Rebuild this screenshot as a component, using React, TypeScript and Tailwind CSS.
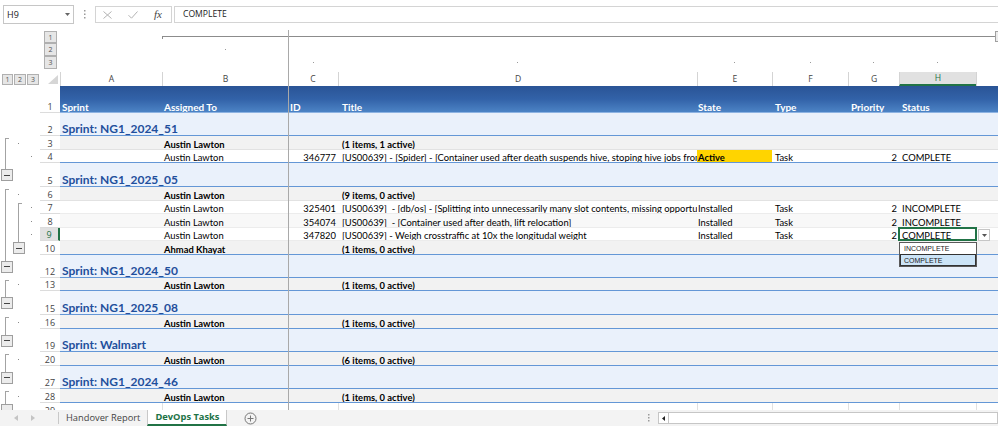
import React from 'react';

type G = '' | 'dot' | 'line' | 'start' | 'btn';
type Kind = 'head' | 'sprint' | 'group' | 'data' | 'blank';
interface RowDef {
  n: string;
  h: string;
  kind: Kind;
  g: [G, G, G];
  blue?: boolean;
  sel?: boolean;
  shade?: boolean;
  active?: boolean;
  t?: string;
  b?: string;
  c?: string;
  d?: string;
  e?: string;
  f?: string;
  p?: string;
  s?: string;
}

const UI = "font-['Open_Sans',sans-serif]";
const CELLF = "font-['Lato',sans-serif]";

const rows: RowDef[] = [
  { n: '1', h: 'h-[27px]', kind: 'head', g: ['', '', ''] },
  { n: '2', h: 'h-[23px]', kind: 'sprint', g: ['', '', ''], t: 'Sprint: NG1_2024_51' },
  { n: '3', h: 'h-[14px]', kind: 'group', g: ['start', 'dot', ''], b: 'Austin Lawton', d: '(1 items, 1 active)' },
  {
    n: '4', h: 'h-[13px]', kind: 'data', g: ['line', '', 'dot'], blue: true, b: 'Austin Lawton', c: '346777',
    d: '[US00639] - [Spider] - [Container used after death suspends hive, stoping hive jobs from running]',
    e: 'Active', active: true, f: 'Task', p: '2', s: 'COMPLETE',
  },
  { n: '5', h: 'h-[24px]', kind: 'sprint', g: ['btn', '', ''], t: 'Sprint: NG1_2025_05' },
  { n: '6', h: 'h-[14px]', kind: 'group', g: ['start', 'dot', ''], b: 'Austin Lawton', d: '(9 items, 0 active)' },
  {
    n: '7', h: 'h-[13px]', kind: 'data', g: ['line', 'start', 'dot'], b: 'Austin Lawton', c: '325401',
    d: '[US00639]  - [db/os] - [Splitting into unnecessarily many slot contents, missing opportunities]',
    e: 'Installed', f: 'Task', p: '2', s: 'INCOMPLETE',
  },
  {
    n: '8', h: 'h-[14px]', kind: 'data', g: ['line', 'line', 'dot'], shade: true, b: 'Austin Lawton', c: '354074',
    d: '[US00639]  - [Container used after death, lift relocation]', e: 'Installed', f: 'Task', p: '2', s: 'INCOMPLETE',
  },
  {
    n: '9', h: 'h-[13px]', kind: 'data', g: ['line', 'line', 'dot'], sel: true, b: 'Austin Lawton', c: '347820',
    d: '[US00639] - Weigh crosstraffic at 10x the longitudal weight', e: 'Installed', f: 'Task', p: '2', s: 'COMPLETE',
  },
  { n: '10', h: 'h-[14px]', kind: 'group', g: ['line', 'btn', ''], blue: true, b: 'Ahmad Khayat', d: '(1 items, 0 active)' },
  { n: '12', h: 'h-[23px]', kind: 'sprint', g: ['btn', '', ''], t: 'Sprint: NG1_2024_50' },
  { n: '13', h: 'h-[13px]', kind: 'group', g: ['start', 'dot', ''], blue: true, b: 'Austin Lawton', d: '(1 items, 0 active)' },
  { n: '15', h: 'h-[24px]', kind: 'sprint', g: ['btn', '', ''], t: 'Sprint: NG1_2025_08' },
  { n: '16', h: 'h-[14px]', kind: 'group', g: ['start', 'dot', ''], blue: true, b: 'Austin Lawton', d: '(1 items, 0 active)' },
  { n: '19', h: 'h-[23px]', kind: 'sprint', g: ['btn', '', ''], t: 'Sprint: Walmart' },
  { n: '20', h: 'h-[14px]', kind: 'group', g: ['start', 'dot', ''], blue: true, b: 'Austin Lawton', d: '(6 items, 0 active)' },
  { n: '27', h: 'h-[23px]', kind: 'sprint', g: ['btn', '', ''], t: 'Sprint: NG1_2024_46' },
  { n: '28', h: 'h-[14px]', kind: 'group', g: ['start', 'dot', ''], blue: true, b: 'Austin Lawton', d: '(1 items, 0 active)' },
  { n: '29', h: 'h-[14px]', kind: 'blank', g: ['btn', '', ''] },
];

function MinusBtn({ cls }: { cls: string }) {
  return (
    <div className={`w-[12px] h-[12px] shrink-0 border border-[#9e9e9e] bg-[#ececec] flex items-center justify-center ${cls}`}>
      <div className="w-[6px] h-px bg-[#444]" />
    </div>
  );
}

function Gut({ t, lvl }: { t: G; lvl: number }) {
  if (t === 'dot')
    return (
      <div className="w-[13px] h-full flex items-center shrink-0">
        <div className="ml-[5px] w-px h-px bg-[#8a8a8a]" />
      </div>
    );
  if (t === 'line')
    return (
      <div className="w-[13px] h-full shrink-0">
        <div className="ml-[5px] w-px h-full bg-[#a3a3a3]" />
      </div>
    );
  if (t === 'start')
    return (
      <div className="w-[13px] h-full pt-[2px] shrink-0">
        <div className="ml-[5px] w-[4px] h-full border-l border-t border-[#a3a3a3]" />
      </div>
    );
  if (t === 'btn')
    return (
      <div className="w-[13px] h-full flex flex-col shrink-0">
        <div className="ml-[5px] w-px flex-1 bg-[#a3a3a3]" />
        <MinusBtn cls={lvl === 1 ? 'ml-[1px]' : 'ml-0'} />
        <div className="flex-1" />
      </div>
    );
  return <div className="w-[13px] h-full shrink-0" />;
}

function LvlBtn({ label, h }: { label: string; h: string }) {
  return (
    <div className={`w-[13px] ${h} border border-[#b0b0b0] bg-[#e6e6e6] flex items-center justify-center text-[7px] text-[#555] leading-none ${UI}`}>
      {label}
    </div>
  );
}

function SelOverlay() {
  return (
    <>
      <div className="absolute inset-[-1px] border-2 border-[#217346] pointer-events-none" />
      <div className="absolute left-[79px] top-[1px] w-[12px] h-[12px] bg-white border border-[#c6c6c6] flex items-center justify-center">
        <svg width="5" height="3" viewBox="0 0 5 3">
          <path d="M0 0h5L2.5 3z" fill="#555" />
        </svg>
      </div>
      <div className={`absolute left-0 top-[14px] w-[78px] h-[25px] bg-white border border-[#5a5a5a] flex flex-col z-10 font-['Liberation_Sans',sans-serif] text-[7px] text-[#222]`}>
        <div className="h-[11px] flex items-center pl-[4px]">INCOMPLETE</div>
        <div className="h-[12px] flex items-center pl-[3px] bg-[#cce4f7] border border-[#333]">COMPLETE</div>
      </div>
    </>
  );
}

const cellBase = 'h-full shrink-0 flex items-end pb-0 overflow-hidden whitespace-pre';

function Cells({ r }: { r: RowDef }) {
  if (r.kind === 'head') {
    const hb = `${cellBase} text-white font-bold text-[10px]`;
    return (
      <>
        <div className={`w-[102px] pl-[2px] ${hb}`}>Sprint</div>
        <div className={`w-[126px] pl-[2px] ${hb}`}>Assigned To</div>
        <div className={`w-[50px] pl-[2px] ${hb}`}>ID</div>
        <div className={`w-[359px] pl-[4px] ${hb}`}>Title</div>
        <div className={`w-[75px] pl-[1px] ${hb}`}>State</div>
        <div className={`w-[76px] pl-[3px] ${hb}`}>Type</div>
        <div className={`w-[51px] pl-[3px] ${hb}`}>Priority</div>
        <div className={`w-[77px] pl-[3px] ${hb}`}>Status</div>
        <div className="flex-1" />
      </>
    );
  }
  if (r.kind === 'sprint') {
    return (
      <div className={`flex-1 h-full flex items-end pb-0 pl-[2px] whitespace-nowrap text-[12px] font-bold text-[#1f4f9c]`}>
        {r.t}
      </div>
    );
  }
  if (r.kind === 'group') {
    return (
      <>
        <div className="w-[102px] shrink-0" />
        <div className={`w-[126px] pl-[2px] font-bold ${cellBase}`}>{r.b}</div>
        <div className="w-[50px] shrink-0" />
        <div className={`w-[359px] pl-[4px] font-bold ${cellBase}`}>{r.d}</div>
        <div className="flex-1" />
      </>
    );
  }
  if (r.kind === 'blank') {
    return (
      <>
        <div className="w-[102px] shrink-0 h-full" />
        <div className="w-[126px] shrink-0 h-full border-l border-[#e1e1e1]" />
        <div className="w-[50px] shrink-0 h-full" />
        <div className="w-[359px] shrink-0 h-full border-l border-[#e1e1e1]" />
        <div className="w-[75px] shrink-0 h-full border-l border-[#e1e1e1]" />
        <div className="w-[76px] shrink-0 h-full border-l border-[#e1e1e1]" />
        <div className="w-[51px] shrink-0 h-full border-l border-[#e1e1e1]" />
        <div className="w-[77px] shrink-0 h-full border-l border-[#e1e1e1]" />
        <div className="flex-1 h-full border-l border-[#e1e1e1]" />
      </>
    );
  }
  return (
    <>
      <div className="w-[102px] shrink-0" />
      <div className={`w-[126px] pl-[2px] ${cellBase}`}>{r.b}</div>
      <div className={`w-[50px] pr-[2px] justify-end ${cellBase}`}>{r.c}</div>
      <div className={`w-[359px] pl-[4px] ${cellBase}`}>{r.d}</div>
      <div className={`w-[75px] pl-[1px] ${cellBase} ${r.active ? 'bg-[#ffd400] font-bold' : ''}`}>{r.e}</div>
      <div className={`w-[76px] pl-[3px] ${cellBase}`}>{r.f}</div>
      <div className={`w-[51px] pr-[2px] justify-end ${cellBase}`}>{r.p}</div>
      <div className={`w-[77px] pl-[3px] h-full shrink-0 flex items-end pb-0 whitespace-pre relative`}>
        {r.s}
        {r.sel && <SelOverlay />}
      </div>
      <div className="flex-1" />
    </>
  );
}

function Row({ r }: { r: RowDef }) {
  let bg = 'bg-white';
  let bb = 'border-[#ececec]';
  if (r.kind === 'head') {
    bg = 'bg-[linear-gradient(180deg,#2a5496_0%,#3262a8_50%,#4c83c5_100%)]';
    bb = 'border-[#8db3e2]';
  } else if (r.kind === 'sprint') {
    bg = 'bg-[#eaf1fb]';
    bb = 'border-[#6497d6]';
  } else if (r.kind === 'group') {
    bg = 'bg-[#f2f2f2]';
    bb = 'border-[#e2e2e2]';
  } else if (r.kind === 'data' && r.shade) {
    bg = 'bg-[#f8f8f8]';
  } else if (r.kind === 'blank') {
    bb = 'border-transparent';
  }
  if (r.blue) bb = 'border-[#6497d6]';
  const rn = r.sel
    ? 'bg-[#e1e1e1] text-[#217346] border-r-2 border-r-[#217346]'
    : 'bg-white text-[#444]';
  return (
    <div className={`${r.h} shrink-0 flex leading-none`}>
      <div className="w-[40px] shrink-0 h-full flex">
        <Gut t={r.g[0]} lvl={1} />
        <Gut t={r.g[1]} lvl={2} />
        <Gut t={r.g[2]} lvl={3} />
      </div>
      <div className={`w-[20px] shrink-0 h-full border-b border-b-[#dcdcdc] flex items-end justify-center pb-px text-[9px] ${UI} ${rn}`}>
        {r.n}
      </div>
      <div className={`flex-1 h-full flex border-b ${bb} ${bg} ${CELLF} text-[9.4px] text-black`}>
        <Cells r={r} />
      </div>
    </div>
  );
}

const COLS: { w: string; l: string }[] = [
  { w: 'w-[102px]', l: 'A' },
  { w: 'w-[126px]', l: 'B' },
  { w: 'w-[50px]', l: 'C' },
  { w: 'w-[359px]', l: 'D' },
  { w: 'w-[75px]', l: 'E' },
  { w: 'w-[76px]', l: 'F' },
  { w: 'w-[51px]', l: 'G' },
  { w: 'w-[77px]', l: 'H' },
];

function Dot() {
  return <div className="w-px h-px bg-[#9a9a9a]" />;
}

export default function App() {
  return (
    <div className={`w-[998px] h-[426px] overflow-hidden bg-white relative flex flex-col ${UI}`}>
      {/* Formula bar */}
      <div className="h-[30px] shrink-0 flex items-start bg-white">
        <div className="mt-[5px] ml-[3px] w-[71px] h-[19px] shrink-0 border border-[#c6c6c6] flex items-center justify-between pl-[3px] pr-[3px]">
          <span className="text-[9px] text-[#222] leading-none">H9</span>
          <svg width="5" height="3" viewBox="0 0 5 3">
            <path d="M0 0h5L2.5 3z" fill="#666" />
          </svg>
        </div>
        <div className="w-[21px] h-[30px] shrink-0 flex justify-center pt-[10px]">
          <svg width="2" height="9" viewBox="0 0 2 9">
            <rect x="0" y="0" width="1.5" height="1.5" fill="#9a9a9a" />
            <rect x="0" y="3.5" width="1.5" height="1.5" fill="#9a9a9a" />
            <rect x="0" y="7" width="1.5" height="1.5" fill="#9a9a9a" />
          </svg>
        </div>
        <div className="mt-[6px] w-[77px] h-[17px] shrink-0 border border-[#d4d4d4] flex items-center">
          <svg className="ml-[7px]" width="9" height="8" viewBox="0 0 9 8">
            <path d="M0.5 0.5l8 7M8.5 0.5l-8 7" stroke="#b3b3b3" strokeWidth="1" fill="none" />
          </svg>
          <svg className="ml-[16px]" width="10" height="8" viewBox="0 0 10 8">
            <path d="M0.5 4.2l3 3 6-6.7" stroke="#b3b3b3" strokeWidth="1" fill="none" />
          </svg>
          <span className="ml-[16px] font-['Liberation_Serif',serif] italic text-[11px] text-[#444] leading-none">fx</span>
        </div>
        <div className="mt-[6px] ml-[2px] flex-1 h-[17px] border border-[#d4d4d4] border-r-0 pl-[8px] flex items-center text-[8.6px] text-[#222] leading-none">
          COMPLETE
        </div>
      </div>

      {/* Column outline area */}
      <div className="h-[42px] shrink-0 flex">
        <div className="w-[60px] shrink-0 flex flex-col pl-[44px] pt-[1px]">
          <LvlBtn label="1" h="h-[12px]" />
          <LvlBtn label="2" h="h-[13px]" />
          <LvlBtn label="3" h="h-[13px]" />
        </div>
        <div className="flex-1 flex flex-col pt-[1px]">
          <div className="h-[12px] flex">
            <div className="w-[102px] shrink-0" />
            <div className="w-[833px] shrink-0 mt-[5px] h-[3px] border-t border-l border-[#8c8c8c]" />
            <div className="w-[12px] h-[11px] shrink-0 border border-[#a0a0a0] bg-[#ececec] flex items-center justify-center">
              <div className="w-[6px] h-px bg-[#444]" />
            </div>
          </div>
          <div className="h-[13px] flex">
            {COLS.map((c, i) => (
              <div key={c.l} className={`${c.w} shrink-0 h-full flex items-center justify-center`}>
                {i === 1 && <Dot />}
              </div>
            ))}
          </div>
          <div className="h-[13px] flex">
            {COLS.map((c, i) => (
              <div key={c.l} className={`${c.w} shrink-0 h-full flex items-center justify-center`}>
                {i >= 2 && <Dot />}
              </div>
            ))}
          </div>
        </div>
      </div>

      {/* Column header row */}
      <div className="h-[14px] shrink-0 flex">
        <div className="w-[60px] shrink-0 flex items-center pl-[2px]">
          <div className="flex gap-[1px]">
            <div className={`w-[11px] h-[11px] border border-[#b0b0b0] bg-[#e6e6e6] flex items-center justify-center text-[7px] text-[#555] leading-none`}>1</div>
            <div className={`w-[12px] h-[11px] border border-[#b0b0b0] bg-[#e6e6e6] flex items-center justify-center text-[7px] text-[#555] leading-none`}>2</div>
            <div className={`w-[12px] h-[11px] border border-[#b0b0b0] bg-[#e6e6e6] flex items-center justify-center text-[7px] text-[#555] leading-none`}>3</div>
          </div>
          <svg className="ml-[9px]" width="10" height="9" viewBox="0 0 10 9">
            <path d="M10 0V9H0z" fill="#d6d6d6" />
          </svg>
        </div>
        {COLS.map((c) => (
          <div
            key={c.l}
            className={`${c.w} shrink-0 h-full flex items-center justify-center text-[8.6px] leading-none ${
              c.l === 'C' ? '' : 'border-l border-[#d4d4d4]'
            } ${c.l === 'H' ? 'bg-[#e1e1e1] text-[#217346] border-b-2 border-b-[#217346]' : 'text-[#444]'}`}
          >
            {c.l}
          </div>
        ))}
        <div className="flex-1 h-full border-l border-[#d4d4d4]" />
      </div>

      {/* Grid */}
      <div className="h-[324px] shrink-0 overflow-hidden flex flex-col">
        {rows.map((r) => (
          <Row key={r.n} r={r} />
        ))}
      </div>

      {/* Sheet tabs */}
      <div className="h-[16px] shrink-0 bg-[#f3f3f3] flex items-stretch">
        <div className="w-[58px] shrink-0 flex items-center pl-[14px] gap-[13px]">
          <svg width="4" height="6" viewBox="0 0 4 6">
            <path d="M4 0v6L0 3z" fill="#c4c4c4" />
          </svg>
          <svg width="4" height="6" viewBox="0 0 4 6">
            <path d="M0 0v6l4-3z" fill="#c4c4c4" />
          </svg>
        </div>
        <div className="w-px my-[2px] bg-[#c8c8c8]" />
        <div className="px-[7px] flex items-center text-[9.3px] text-[#444] leading-none whitespace-nowrap">Handover Report</div>
        <div className="bg-white border-x border-[#c8c8c8] border-b-2 border-b-[#217346] px-[7px] flex items-center text-[9.3px] font-bold text-[#217346] leading-none whitespace-nowrap">
          DevOps Tasks
        </div>
        <div className="ml-[17px] flex items-center">
          <svg width="13" height="13" viewBox="0 0 13 13">
            <circle cx="6.5" cy="6.5" r="5.5" stroke="#777" strokeWidth="1" fill="none" />
            <path d="M6.5 3.5v6M3.5 6.5h6" stroke="#777" strokeWidth="1" />
          </svg>
        </div>
        <div className="flex-1" />
        <div className="w-[14px] flex items-center pl-[4px]">
          <svg width="2" height="8" viewBox="0 0 2 8">
            <rect x="0" y="0" width="1.5" height="1.5" fill="#9a9a9a" />
            <rect x="0" y="3" width="1.5" height="1.5" fill="#9a9a9a" />
            <rect x="0" y="6" width="1.5" height="1.5" fill="#9a9a9a" />
          </svg>
        </div>
        <div className="w-[340px] shrink-0 my-[2px] border border-[#c6c6c6] bg-white flex">
          <div className="w-[10px] h-full border-r border-[#c6c6c6] flex items-center justify-center">
            <svg width="3" height="5" viewBox="0 0 3 5">
              <path d="M3 0v5L0 2.5z" fill="#222" />
            </svg>
          </div>
        </div>
      </div>

      {/* Freeze pane divider */}
      <div className="absolute left-[288px] top-[30px] h-[380px] w-px bg-[#a9a9a9]" />
    </div>
  );
}
